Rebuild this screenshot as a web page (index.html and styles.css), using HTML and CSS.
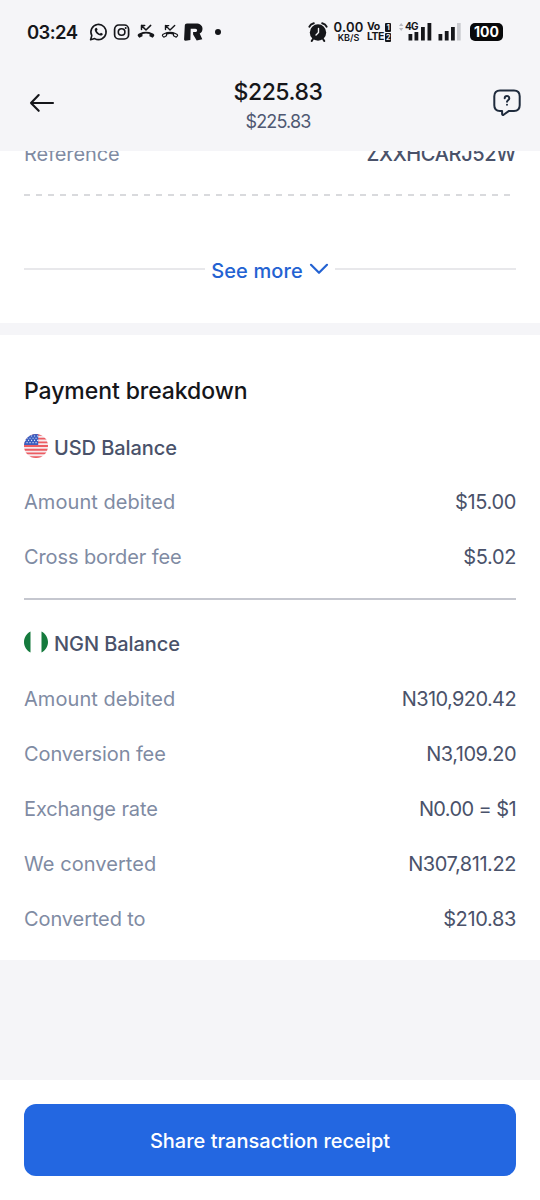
FILE: index.html
```html
<!DOCTYPE html>
<html lang="en">
<head>
<meta charset="utf-8">
<meta name="viewport" content="width=device-width, initial-scale=1">
<title>Transaction details</title>
<link rel="stylesheet" href="styles.css">
</head>
<body>
<div class="screen">
  <div class="status">
    <span class="clock">03:24</span>
    <svg class="status-apps" width="134" height="24" viewBox="0 0 134 24" fill="none" stroke="#15161a" stroke-linecap="round" stroke-linejoin="round">
      <path d="M1.6 19.8 2.8 15.6A7.6 7.6 0 1 1 5.700 18.600Z" stroke-width="1.6"/>
      <path d="M6.4 8.2c.5-.7 1.3-.7 1.6 0l.6 1.5-.8 1.1c.7 1.5 1.7 2.4 3.1 3l1.100-1 1.700.9c.5 1.300-1.200 2.100-2.400 1.800-2.900-.6-5.300-3-5.600-5.400 0-.8.2-1.400.7-1.900Z" fill="#15161a" stroke="none"/>
      <rect x="25.600" y="5" width="14" height="14" rx="4.200" stroke-width="1.700"/>
      <circle cx="32.600" cy="12" r="3.300" stroke-width="1.600"/>
      <circle cx="36.700" cy="8" r="1" fill="#15161a" stroke="none"/>
      <path d="M52.500 5.600v4M52.500 5.600h3.200M52.500 5.600l4.500 4.400 4.700-4.600" stroke-width="1.500"/>
      <path d="M49.200 16.500c-1.300-1.500-.1-2.700 1.500-3.300 4-1.900 8.600-1.900 12.600 0 1.600.6 2.800 1.800 1.500 3.300l-1.200 1.300-3.100-1.600v-2.100a11 11 0 0 0-7 0v2.100l-3.100 1.600Z" fill="#15161a" stroke="none"/>
      <path d="M76.500 5.600v4M76.500 5.600h3.200M76.500 5.600l4.500 4.400 4.700-4.600" stroke-width="1.400"/>
      <path d="M73.800 16.200c-1-1.100 0-2 1.300-2.500 3.700-1.700 8.100-1.700 11.800 0 1.300.5 2.300 1.400 1.300 2.500l-1 1-2.700-1.400v-1.700a10 10 0 0 0-7 0v1.700l-2.700 1.400Z" stroke-width="1.200"/>
      <path d="M98 3.500h9c4 0 6.500 2 6.500 5.300 0 2.200-1 3.900-2.800 4.700l2.600 5.700-5.600 1.200-3.600-5.900v-2.400h2.200c2.400 0 2.400-3.400 0-3.400h-4.600l-.3 11.400-4.900.6c-1.100 0-1.500-.5-1.400-1.600l.7-13.600c.1-1.300.8-2 2.200-2Z" fill="#15161a" stroke="none"/>
      <circle cx="129" cy="12" r="3" fill="#15161a" stroke="none"/>
    </svg>
    <svg class="alarm" width="20" height="22" viewBox="0 0 20 22" fill="none" stroke="#15161a" stroke-linecap="round">
      <circle cx="10" cy="11.500" r="8.200" fill="#15161a" stroke="none"/>
      <path d="M1.400 5.700Q2.500 3 5.800 2.200M18.600 5.700Q17.500 3 14.200 2.200" stroke-width="2"/>
      <path d="m5 18-1.300 2M15 18l1.300 2" stroke-width="2"/>
      <path d="M10.500 7.500v4L8 14" stroke="#f5f5f8" stroke-width="1.400"/>
    </svg>
    <div class="stack speed"><b class="rate">0.00</b><b class="unit">KB/S</b></div>
    <div class="stack lte">
      <b>Vo <i class="sim">1</i></b>
      <b>LTE<i class="sim">2</i></b>
    </div>
    <div class="network">
      <b class="gen">4G</b>
      <svg width="90" height="22" viewBox="0 0 90 22">
        <path d="m1 5 2.200-3 2.200 3ZM1 7l2.200 3 2.200-3Z" fill="#b9bac0"/>
        <path d="M10.500 13h3.800v6.500h-3.800ZM16.500 11h3.800v8.500h-3.800ZM23 6h3.800v13.500H23ZM29.500 2h3.800v17.500h-3.800Z" fill="#15161a"/>
        <path d="M40.500 13h3.800v6.500h-3.800ZM46.800 10h3.800v9.500h-3.800ZM53 6h3.800v13.500H53Z" fill="#15161a"/>
        <path d="M59 2h3.700v17.500H59Z" fill="#c9cacf"/>
      </svg>
    </div>
    <div class="battery">100</div>
  </div>

  <header class="header">
    <svg class="back" width="26" height="20" viewBox="0 0 26 20" fill="none" stroke="#15161a" stroke-width="2.100" stroke-linecap="round" stroke-linejoin="round">
      <path d="M24 10H2M9.700 2 2 10l7.700 7.800"/>
    </svg>
    <div class="heading">
      <h1>$225.83</h1>
      <p>$225.83</p>
    </div>
    <svg class="help" width="30" height="28" viewBox="0 0 30 28" fill="none" stroke="#1f2b3d" stroke-width="2" stroke-linecap="round" stroke-linejoin="round">
      <path d="M8 1.500h14c3.800 0 5.700 2 5.700 5.700v9c0 3.800-2 5.700-5.700 5.700h-5l-5.400 3.900c-.8.500-1.500.1-1.500-.8v-3.100H8c-3.700 0-5.700-2-5.700-5.700v-9C2.300 3.500 4.300 1.500 8 1.500Z"/>
      <path d="M12.700 9.300c.1-3 4.600-3 4.600 0 0 1.900-2.300 1.900-2.300 3.500M15 15.700v.1"/>
    </svg>
  </header>

  <section class="card details">
    <div class="row reference"><span class="label">Reference</span><span class="value">ZXXHCARJ52W</span></div>
    <div class="dashes"></div>
    <div class="more">
      <span class="rule"></span>
      <a class="more-link">See more</a>
      <svg width="20" height="12" viewBox="0 0 20 12" fill="none" stroke="#2362d2" stroke-width="2.200" stroke-linecap="round" stroke-linejoin="round"><path d="m2 1.800 8 8 8-8"/></svg>
      <span class="rule"></span>
    </div>
  </section>

  <section class="card breakdown">
    <h2>Payment breakdown</h2>
    <h3>
      <svg width="24" height="24" viewBox="0 0 24 24">
        <clipPath id="round"><circle cx="12" cy="12" r="12"/></clipPath>
        <g clip-path="url(#round)">
          <path fill="#f7e9ec" d="M0 0h24v24H0z"/>
          <path stroke="#ec5c62" stroke-width="1.850" d="M0 .9h24M0 4.600h24M0 8.300h24M0 12h24M0 15.700h24M0 19.400h24M0 23.100h24"/>
          <path fill="#3c5fc0" d="M0 0h14.200v11H0z"/>
          <path stroke="#dce4f7" stroke-width="1.100" stroke-dasharray="1.100 1.900" d="M1 2h13M2.500 4.200h12M1 6.400h13M2.500 8.600h12"/>
        </g>
      </svg>
      <span>USD Balance</span>
    </h3>
    <div class="row"><span class="label debited">Amount debited</span><span class="value v-15">$15.00</span></div>
    <div class="row"><span class="label">Cross border fee</span><span class="value v-5">$5.02</span></div>
    <hr>
    <h3>
      <svg width="24" height="24" viewBox="0 0 24 24">
        <path fill="#157a3d" d="M6.500 1.500v21C2.700 20.500 0 16.700 0 12S2.700 3.500 6.500 1.500ZM17.500 1.500v21C21.300 20.500 24 16.700 24 12s-2.700-8.500-6.500-10.500Z"/>
      </svg>
      <span>NGN Balance</span>
    </h3>
    <div class="row"><span class="label debited">Amount debited</span><span class="value v-debit">N310,920.42</span></div>
    <div class="row"><span class="label">Conversion fee</span><span class="value v-fee">N3,109.20</span></div>
    <div class="row"><span class="label">Exchange rate</span><span class="value v-rate">N0.00 = $1</span></div>
    <div class="row"><span class="label debited">We converted</span><span class="value v-conv">N307,811.22</span></div>
    <div class="row"><span class="label">Converted to</span><span class="value v-to">$210.83</span></div>
  </section>

  <footer class="footer"><button class="share">Share transaction receipt</button></footer>
</div>
</body>
</html>
```

FILE: styles.css
```css
* { box-sizing: border-box; margin: 0; padding: 0; }

body {
  background: #f5f5f8;
  font-family: Inter, "Liberation Sans", sans-serif;
  color: #15161a;
}

.screen {
  width: 540px;
  height: 1200px;
  display: flex;
  flex-direction: column;
  overflow: hidden;
}

.status {
  flex: none;
  height: 64px;
  padding: 0 36px 0 27px;
  display: flex;
  align-items: center;
}
.clock { width: 62px; margin-top: -1px; font-size: 18.500px; font-weight: 600; letter-spacing: -.6px; white-space: nowrap; }
.status-apps { flex: none; }
.alarm { flex: none; margin-left: 85px; }
.stack { display: flex; flex-direction: column; align-items: center; flex: none; white-space: nowrap; }
.speed { width: 31px; margin-left: 5px; margin-top: -1px; }
.rate { font-size: 13px; line-height: 12px; font-weight: 600; letter-spacing: .2px; }
.unit { font-size: 9px; line-height: 9px; font-weight: 600; }
.lte { width: 24px; margin-left: 3px; font-size: 10.500px; line-height: 10px; align-items: stretch; }
.lte b { display: flex; justify-content: space-between; align-items: center; letter-spacing: -.5px; }
.sim {
  width: 6px;
  height: 9px;
  background: #15161a;
  color: #f5f5f8;
  font-size: 7px;
  line-height: 9px;
  font-style: normal;
  text-align: center;
  border-radius: 1px;
}
.network { position: relative; flex: none; width: 63px; height: 22px; margin-left: 7px; }
.gen { position: absolute; left: 7px; top: 0; font-size: 10px; line-height: 10px; letter-spacing: -.8px; }
.battery {
  flex: none;
  width: 33px;
  height: 18px;
  margin-left: 9px;
  border-radius: 5px;
  background: #08090b;
  color: #fff;
  font-size: 14px;
  line-height: 18px;
  font-weight: 700;
  text-align: center;
}

.header {
  flex: none;
  height: 87px;
  padding: 0 18px 0 29px;
  display: flex;
  align-items: flex-start;
}
.back { margin-top: 29px; }
.help { margin-top: 25px; }
.heading { flex: 1; text-align: center; padding: 13px 0 0 9px; }
.heading h1 { font-size: 23px; line-height: 30px; font-weight: 500; letter-spacing: -.45px; }
.heading p { font-size: 18px; line-height: 29px; color: #4f5872; letter-spacing: -.85px; }

.card { flex: none; background: #fff; padding: 0 24px; }
.details { height: 172px; overflow: hidden; }
.reference { margin-top: -24px; }
.row { height: 55px; display: flex; justify-content: space-between; align-items: center; padding-bottom: 2px; font-size: 20px; white-space: nowrap; }
.label { color: #7f8ba3; letter-spacing: -.1px; }
.debited { letter-spacing: .06px; }
.value { color: #4a526a; }
.reference .value { font-weight: 500; letter-spacing: -.35px; }
.v-15, .v-5, .v-to { letter-spacing: -.35px; }
.v-debit { letter-spacing: -.6px; }
.v-fee { letter-spacing: -.5px; }
.v-rate { letter-spacing: -.6px; }
.v-conv { letter-spacing: -.43px; }
.dashes {
  height: 2px;
  width: 486px;
  margin-top: 12px;
  background: repeating-linear-gradient(90deg, #d9dadd 0 6px, transparent 6px 12px);
}
.more { display: flex; align-items: center; height: 30px; margin-top: 58px; color: #2362d2; font-size: 20px; }
.more-link { font-weight: 500; margin: 3px 6px 0 6px; letter-spacing: .1px; }
.rule { flex: 1; height: 2px; background: #e8e8eb; }
.more svg + .rule { margin-left: 6px; }

.breakdown { height: 625px; margin-top: 12px; }
.breakdown h2 { padding-top: 41px; font-size: 23px; line-height: 30px; font-weight: 500; letter-spacing: -.08px; white-space: nowrap; }
.breakdown h3 {
  display: flex;
  align-items: center;
  gap: 6px;
  height: 30px;
  font-size: 20px;
  font-weight: 500;
  letter-spacing: -.08px;
  color: #4a526a;
}
.breakdown h3 svg { margin-top: -4px; }
.breakdown h2 + h3 { margin: 27px 0 12px; }
.breakdown hr { height: 2px; border: 0; background: #c5c7cf; margin: 13px 0 29px; }
.breakdown hr + h3 { margin-bottom: 13px; }

.footer { margin-top: auto; flex: none; height: 120px; padding: 24px; background: #fff; }
.share {
  display: block;
  width: 492px;
  height: 72px;
  padding-top: 2px;
  border: 0;
  border-radius: 12px;
  background: #2367e1;
  color: #fff;
  font-family: inherit;
  font-size: 20px;
  font-weight: 500;
}
```
